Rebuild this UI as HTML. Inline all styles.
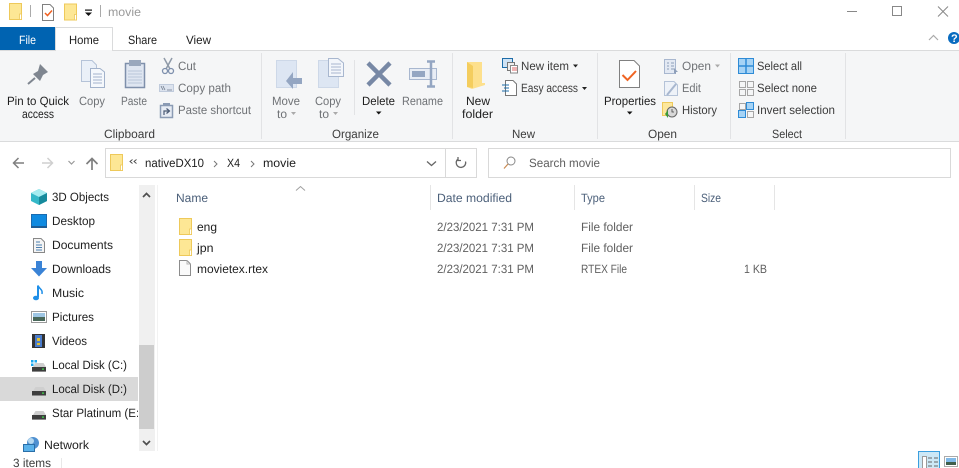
<!DOCTYPE html>
<html><head><meta charset="utf-8"><title>movie</title>
<style>
html,body{margin:0;padding:0;background:#fff;width:959px;height:468px;overflow:hidden}
svg{display:block}
text{font-family:"Liberation Sans",sans-serif;font-size:12px;fill:#1e1e1e;text-rendering:geometricPrecision}
.g{fill:#6f7276}
.b{fill:#3c3c3c}
.h{fill:#4c607a}
.r{fill:#5f5f5f}
.hf{fill:#fde795;stroke:#eec95a;stroke-width:1}
</style></head><body>
<svg width="959" height="468" viewBox="0 0 959 468" xmlns="http://www.w3.org/2000/svg">
<defs>
<g id="f"><path class="hf" d="M.5 .5H12.500V16.500H.5Z"/><rect x="10.500" y="11" width="2" height="5.500" fill="#fff" stroke="#eec95a" stroke-width=".8"/></g>
<g id="drive"><path d="M3 7L5.500 3H13.500L16 7Z" fill="#cfcfcf"/><rect x="2" y="7" width="14" height="5" fill="#3e3e3e"/><rect x="2" y="11" width="14" height="1" fill="#8a8a8a"/><rect x="12" y="8.500" width="2" height="1.200" fill="#3fe04a"/></g>
</defs>

<!-- title bar -->
<use href="#f" x="9" y="3"/>
<rect x="30" y="5" width="1" height="12" fill="#aaa"/>
<path d="M42.500 4.500H50L53.500 8V20.500H42.500Z" fill="#fff" stroke="#808080"/>
<path d="M45 13L47.500 15.500L52 10.500" fill="none" stroke="#f06020" stroke-width="1.500"/>
<use href="#f" x="64" y="3.500"/>
<rect x="85" y="9.500" width="7" height="1.200" fill="#111"/><path d="M85 12.500H92L88.500 16Z" fill="#111"/>
<rect x="100" y="5" width="1" height="12" fill="#aaa"/>
<text x="108" y="16" textLength="33" lengthAdjust="spacingAndGlyphs" style="fill:#9a9a9a">movie</text>
<path d="M847 11.500H857" stroke="#888" stroke-width="1"/>
<rect x="892.500" y="6.500" width="9" height="9" fill="none" stroke="#888"/>
<path d="M938 6.500L948 16.500M948 6.500L938 16.500" stroke="#888" stroke-width="1"/>

<!-- tabs -->
<rect x="0" y="27" width="55" height="23" fill="#0063b1"/>
<text x="19" y="44" textLength="17" lengthAdjust="spacingAndGlyphs" style="fill:#fff">File</text>
<rect x="0" y="50" width="959" height="1" fill="#dadbdc"/>
<path d="M55.500 51V27.500H112.500V51" fill="#fff" stroke="#dadbdc"/>
<rect x="56" y="50" width="56" height="2" fill="#f5f6f7"/>
<text x="69" y="44" textLength="30" lengthAdjust="spacingAndGlyphs">Home</text>
<text x="128" y="44" textLength="29" lengthAdjust="spacingAndGlyphs">Share</text>
<text x="186" y="44" textLength="25" lengthAdjust="spacingAndGlyphs">View</text>
<path d="M929 40L933.500 35.500L938 40" fill="none" stroke="#aaa" stroke-width="1.200"/>
<circle cx="954" cy="38" r="6" fill="#0a6cc0"/>
<text x="951" y="42" style="fill:#fff;font-weight:bold;font-size:11px">?</text>

<!-- ribbon -->
<rect x="0" y="51" width="959" height="90" fill="#f5f6f7"/>
<rect x="0" y="141" width="959" height="1" fill="#dadbdc"/>
<rect x="261" y="53" width="1" height="86" fill="#e2e3e5"/>
<rect x="452" y="53" width="1" height="86" fill="#e2e3e5"/>
<rect x="597" y="53" width="1" height="86" fill="#e2e3e5"/>
<rect x="730" y="53" width="1" height="86" fill="#e2e3e5"/>
<rect x="845" y="53" width="1" height="86" fill="#e2e3e5"/>
<rect x="354" y="60" width="1" height="55" fill="#e2e3e5"/>

<!-- pin -->
<path d="M40 64L48 72L43 75L40 81L33 74L38 71Z" fill="#7f8690"/><path d="M35 78L28 84" stroke="#7f8690" stroke-width="2"/>
<text x="7" y="105" textLength="62" lengthAdjust="spacingAndGlyphs">Pin to Quick</text>
<text x="22" y="118" textLength="32" lengthAdjust="spacingAndGlyphs">access</text>

<!-- copy -->
<path d="M81.500 60.500H92L96.500 65V81.500H81.500Z" fill="#eaf0f8" stroke="#b5c3d8"/>
<path d="M90.500 68.500H100L104.500 72V87.500H90.500Z" fill="#f5f8fc" stroke="#a2b2cb"/>
<path d="M93 74H102M93 77H102M93 80H102M93 83H102" stroke="#a2b2cb"/>
<text x="79" y="105" textLength="26" lengthAdjust="spacingAndGlyphs" class="g">Copy</text>

<!-- paste -->
<rect x="125.500" y="63.500" width="19" height="24" fill="#dfe6f1" stroke="#7f90ab" stroke-width="1.500"/>
<rect x="129" y="60" width="12" height="6" fill="#9aa8bd"/>
<path d="M128 71H142M128 74H142M128 77H142M128 80H142M128 83H142" stroke="#b8c5d9"/>
<text x="121" y="105" textLength="26" lengthAdjust="spacingAndGlyphs" class="g">Paste</text>

<!-- small clipboard -->
<path d="M164 58L170 69M172 58L166 69" stroke="#8f9aa8" stroke-width="1.500"/>
<circle cx="165" cy="71" r="2.500" fill="none" stroke="#7e90ad" stroke-width="1.300"/><circle cx="171" cy="71" r="2.500" fill="none" stroke="#7e90ad" stroke-width="1.300"/>
<text x="178" y="70" textLength="18" lengthAdjust="spacingAndGlyphs" class="g">Cut</text>
<rect x="159.500" y="84.500" width="14" height="7" fill="#dce3ee" stroke="#c0cbdc"/>
<path d="M161 86L163 90M163 86L165 90M167 90H172" stroke="#6f7a8c" stroke-width=".8"/>
<text x="178" y="92" textLength="53" lengthAdjust="spacingAndGlyphs" class="g">Copy path</text>
<path d="M160.500 105.500H172.500V117.500H160.500Z" fill="#e7ecf4" stroke="#8b9bb4" stroke-width="1.500"/>
<rect x="163" y="103" width="7" height="3" fill="#8b9bb4"/>
<path d="M164 115L164 111H169M166.500 108.500L169.500 111L166.500 113.500" fill="none" stroke="#4b5b75" stroke-width="1.200"/>
<text x="178" y="114" textLength="73" lengthAdjust="spacingAndGlyphs" class="g">Paste shortcut</text>
<text x="104" y="138" textLength="51" lengthAdjust="spacingAndGlyphs" class="b">Clipboard</text>

<!-- move to -->
<rect x="276.500" y="60.500" width="20" height="27" fill="#dde6f3" stroke="#cdd8e8"/>
<path d="M302 78H293V72L286 81L293 89V84H302Z" fill="#94a6c2"/>
<text x="272" y="105" textLength="28" lengthAdjust="spacingAndGlyphs" class="g">Move</text>
<text x="277" y="118" textLength="10" lengthAdjust="spacingAndGlyphs" class="g">to</text>
<path d="M291 112H296L293.500 115Z" fill="#aaa"/>
<!-- copy to -->
<rect x="318.500" y="60.500" width="20" height="27" fill="#dde6f3" stroke="#cdd8e8"/>
<path d="M328.500 58.500H338L343.500 63V76.500H328.500Z" fill="#f3f6fb" stroke="#a8b7cf"/>
<path d="M331 64H341M331 67H341M331 70H341M331 73H341" stroke="#a8b7cf"/>
<text x="315" y="105" textLength="26" lengthAdjust="spacingAndGlyphs" class="g">Copy</text>
<text x="319" y="118" textLength="10" lengthAdjust="spacingAndGlyphs" class="g">to</text>
<path d="M333 112H338L335.500 115Z" fill="#aaa"/>
<!-- delete -->
<path d="M368 63L390 85M390 63L368 85" stroke="#7788a5" stroke-width="4.500"/>
<text x="362" y="105" textLength="33" lengthAdjust="spacingAndGlyphs">Delete</text>
<path d="M376 111.500H381.500L378.700 114.500Z" fill="#111"/>
<!-- rename -->
<rect x="409.500" y="68.500" width="27" height="11" fill="#e8edf5" stroke="#a8b7cf"/>
<rect x="412" y="71" width="13" height="6" fill="#94a6c2"/>
<path d="M431 62V86M427 61.500H435M427 86.500H435" stroke="#94a6c2" stroke-width="2.500"/>
<text x="402" y="105" textLength="41" lengthAdjust="spacingAndGlyphs" class="g">Rename</text>
<text x="332" y="138" textLength="47" lengthAdjust="spacingAndGlyphs" class="b">Organize</text>

<!-- new folder -->
<path d="M467 62H482V83H485V85L472 89L467 87Z" fill="#fde08d"/>
<path d="M467 62L473 66V88L467 87Z" fill="#f4cd5e"/>
<text x="466" y="105" textLength="24" lengthAdjust="spacingAndGlyphs">New</text>
<text x="462" y="118" textLength="31" lengthAdjust="spacingAndGlyphs">folder</text>
<!-- new item -->
<rect x="502.500" y="58.500" width="10" height="9" fill="#cfe3f5" stroke="#1d6ca8"/>
<rect x="507.500" y="62.500" width="7" height="8" fill="#eee" stroke="#777"/>
<rect x="510.500" y="65.500" width="7" height="7.500" fill="#fff" stroke="#888"/>
<path d="M512 68H517M512 70H517" stroke="#d66"/>
<text x="521" y="70" textLength="48" lengthAdjust="spacingAndGlyphs" class="b">New item</text>
<path d="M573 64.500H578L575.500 67.500Z" fill="#222"/>
<!-- easy access -->
<path d="M505.500 80.500H513L516.500 84V95.500H505.500Z" fill="#fff" stroke="#777"/>
<path d="M502 85H509M504 88H509M502 91H509" stroke="#1d6ca8"/>
<text x="521" y="92" textLength="57" lengthAdjust="spacingAndGlyphs" class="b">Easy access</text>
<path d="M582 87H587L584.500 90Z" fill="#222"/>
<text x="512" y="138" textLength="23" lengthAdjust="spacingAndGlyphs" class="b">New</text>

<!-- properties -->
<path d="M619.500 60.500H634L639.500 66V87.500H619.500Z" fill="#fff" stroke="#808080"/>
<path d="M622.500 75L627.500 80L636 71" fill="none" stroke="#ef6423" stroke-width="2"/>
<text x="604" y="105" textLength="52" lengthAdjust="spacingAndGlyphs">Properties</text>
<path d="M627 111.500H632.500L629.700 114.500Z" fill="#111"/>
<!-- open -->
<rect x="664.500" y="59.500" width="11" height="14" fill="#e3e9f3" stroke="#a8b7cf"/>
<path d="M667 63H669M671 63H674M667 66H669M671 66H674M667 69H669M671 69H674" stroke="#8e9fba"/>
<path d="M674 73V68L678 72H676V74Z" fill="#8e9fba"/>
<text x="682" y="70" textLength="29" lengthAdjust="spacingAndGlyphs" class="g">Open</text>
<path d="M715 64.500H720L717.500 67.500Z" fill="#aaa"/>
<!-- edit -->
<path d="M664.500 81.500H674L677.500 85V95.500H664.500Z" fill="#eef2f8" stroke="#b5c3d8"/>
<path d="M667 95L676 84" stroke="#a8b7cf" stroke-width="2"/>
<text x="682" y="92" textLength="19" lengthAdjust="spacingAndGlyphs" class="g">Edit</text>
<!-- history -->
<rect x="662.500" y="102.500" width="10" height="13" fill="#fde79c" stroke="#eec95a"/>
<circle cx="672" cy="112" r="5" fill="#d8d8d8" stroke="#666"/>
<path d="M672 109V112H674" fill="none" stroke="#444" stroke-width=".8"/>
<path d="M665 114L668 110V118Z" fill="#3a9a3a"/>
<text x="682" y="114" textLength="35" lengthAdjust="spacingAndGlyphs" class="b">History</text>
<text x="648" y="138" textLength="29" lengthAdjust="spacingAndGlyphs" class="b">Open</text>

<!-- select -->
<rect x="738.500" y="58.500" width="15" height="15" fill="#a6d3f5" stroke="#2e8bd6"/>
<path d="M746 58V74M738 66H754" stroke="#2e8bd6" stroke-width="1.500"/>
<text x="757" y="70" textLength="45" lengthAdjust="spacingAndGlyphs" class="b">Select all</text>
<g fill="none" stroke="#a6a6a6"><rect x="739.500" y="81.500" width="6" height="6"/><rect x="747.500" y="81.500" width="6" height="6"/><rect x="739.500" y="89.500" width="6" height="6"/><rect x="747.500" y="89.500" width="6" height="6"/></g>
<text x="757" y="92" textLength="60" lengthAdjust="spacingAndGlyphs" class="b">Select none</text>
<rect x="739.500" y="103.500" width="6" height="6" fill="none" stroke="#a6a6a6"/>
<rect x="746.500" y="102.500" width="7" height="7" fill="#a6d3f5" stroke="#2e8bd6"/>
<rect x="738.500" y="110.500" width="7" height="7" fill="#a6d3f5" stroke="#2e8bd6"/>
<rect x="747.500" y="111.500" width="6" height="6" fill="none" stroke="#a6a6a6"/>
<text x="757" y="114" textLength="78" lengthAdjust="spacingAndGlyphs" class="b">Invert selection</text>
<text x="772" y="138" textLength="30" lengthAdjust="spacingAndGlyphs" class="b">Select</text>

<!-- nav buttons -->
<path d="M24 163H14M18.500 158L13.500 163L18.500 168" fill="none" stroke="#7f7f7f" stroke-width="1.500"/>
<path d="M42 163H52M47.500 158L52.500 163L47.500 168" fill="none" stroke="#cfcfcf" stroke-width="1.500"/>
<path d="M68.500 161L71.500 164L74.500 161" fill="none" stroke="#9a9a9a" stroke-width="1.200"/>
<path d="M92 170V159M86.500 164L92 158.500L97.500 164" fill="none" stroke="#7f7f7f" stroke-width="1.700"/>

<!-- address -->
<rect x="105.500" y="148.500" width="371" height="29" fill="#fff" stroke="#d9d9d9"/>
<rect x="445" y="149" width="1" height="28" fill="#d9d9d9"/>
<use href="#f" x="110" y="154"/>
<path d="M132.500 159.500L130 161.500L132.500 163.500M136.500 159.500L134 161.500L136.500 163.500" fill="none" stroke="#444" stroke-width=".9"/>
<text x="145" y="167" textLength="59" lengthAdjust="spacingAndGlyphs">nativeDX10</text>
<path d="M214 161L217 164L214 167" fill="none" stroke="#777" stroke-width="1"/>
<text x="227" y="167" textLength="13" lengthAdjust="spacingAndGlyphs">X4</text>
<path d="M251 161L254 164L251 167" fill="none" stroke="#777" stroke-width="1"/>
<text x="263" y="167" textLength="33" lengthAdjust="spacingAndGlyphs">movie</text>
<path d="M427 161.500L431.500 165.500L436 161.500" fill="none" stroke="#666" stroke-width="1.300"/>
<path d="M457.500 159.500A4.700 4.700 0 1 0 465.500 161.500M458 157V160.500H461" fill="none" stroke="#666" stroke-width="1.300"/>

<!-- search -->
<rect x="488.500" y="148.500" width="462" height="29" fill="#fff" stroke="#d9d9d9"/>
<circle cx="511" cy="161" r="4" fill="none" stroke="#888"/><path d="M508 164L504 168.500" stroke="#c98a52" stroke-width="1.200"/>
<text x="529" y="167" textLength="71" lengthAdjust="spacingAndGlyphs" class="r">Search movie</text>

<!-- sidebar -->
<rect x="0" y="377" width="138" height="24" fill="#d9d9d9"/>
<!-- 3D -->
<path d="M39 189L47 193V201L39 205L31 201V193Z" fill="#35b8c8"/><path d="M39 197L47 193L39 189L31 193Z" fill="#a6ecf0"/><path d="M39 197V205L47 201V193Z" fill="#168a9c"/>
<text x="52" y="201" textLength="57" lengthAdjust="spacingAndGlyphs">3D Objects</text>
<!-- desktop -->
<rect x="31.500" y="214.500" width="15" height="12" fill="#0f8ae0" stroke="#1a6bb0"/><rect x="31" y="226" width="16" height="2" fill="#1d5c94"/>
<text x="52" y="225" textLength="43" lengthAdjust="spacingAndGlyphs">Desktop</text>
<!-- documents -->
<path d="M33.500 238.500H41L44.500 242V252.500H33.500Z" fill="#f4f4f4" stroke="#888"/><path d="M36 242H40M36 245H42M36 247.500H42M36 250H42" stroke="#4d7fb0"/>
<text x="52" y="249" textLength="61" lengthAdjust="spacingAndGlyphs">Documents</text>
<!-- downloads -->
<path d="M36 261H42V268H47L39 276.500L31 268H36Z" fill="#3a83d6"/>
<text x="52" y="273" textLength="59" lengthAdjust="spacingAndGlyphs">Downloads</text>
<!-- music -->
<path d="M38 285.500V297" stroke="#1f8fe8" stroke-width="2"/><path d="M38 285.500C39 289 43 289 42 294" fill="none" stroke="#1f8fe8" stroke-width="1.500"/><ellipse cx="36" cy="298" rx="3" ry="2.300" fill="#1f8fe8"/>
<text x="52" y="297" textLength="32" lengthAdjust="spacingAndGlyphs">Music</text>
<!-- pictures -->
<rect x="31.500" y="311.500" width="15" height="11" fill="#fff" stroke="#9a9a9a"/><rect x="33" y="313" width="12" height="4" fill="#9ec6e4"/><rect x="33" y="317" width="12" height="4" fill="#49685a"/>
<text x="52" y="321" textLength="42" lengthAdjust="spacingAndGlyphs">Pictures</text>
<!-- videos -->
<rect x="32" y="334" width="13" height="14" fill="#333"/><rect x="35" y="335" width="7" height="12" fill="#4a7ccc"/><rect x="37" y="338" width="3" height="3" fill="#e0c030"/><rect x="37" y="343" width="3" height="2" fill="#e0c030"/>
<text x="52" y="345" textLength="35" lengthAdjust="spacingAndGlyphs">Videos</text>
<!-- C -->
<g fill="#1aa7ee"><rect x="31" y="360" width="2.500" height="2.500"/><rect x="34.500" y="360" width="2.500" height="2.500"/><rect x="31" y="363.500" width="2.500" height="2.500"/><rect x="34.500" y="363.500" width="2.500" height="2.500"/></g>
<use href="#drive" x="30" y="360"/>
<text x="52" y="369" textLength="75" lengthAdjust="spacingAndGlyphs">Local Disk (C:)</text>
<use href="#drive" x="30" y="384"/>
<text x="52" y="393" textLength="75" lengthAdjust="spacingAndGlyphs">Local Disk (D:)</text>
<use href="#drive" x="30" y="408"/>
<svg x="0" y="400" width="138" height="26"><text x="52" y="17" textLength="91" lengthAdjust="spacingAndGlyphs">Star Platinum (E:)</text></svg>
<!-- network -->
<circle cx="33" cy="443" r="6" fill="#4f90d0"/><circle cx="31" cy="441" r="3" fill="#b5d8f0"/>
<rect x="23.500" y="444.500" width="11" height="7" fill="#5ab1ea" stroke="#2a6fa8"/>
<text x="44" y="449" textLength="45" lengthAdjust="spacingAndGlyphs">Network</text>

<!-- scrollbar -->
<rect x="139" y="185" width="16" height="266" fill="#f0f0f0"/>
<rect x="139" y="345" width="15" height="84" fill="#cdcdcd"/>
<path d="M143 197L146.500 193.500L150 197" fill="none" stroke="#505050" stroke-width="1.700"/>
<path d="M143 441L146.500 444.500L150 441" fill="none" stroke="#505050" stroke-width="1.700"/>
<rect x="157" y="185" width="1" height="266" fill="#f2f2f2"/>

<!-- columns -->
<path d="M296 190.500L300.500 186.500L305 190.500" fill="none" stroke="#a0a0a0"/>
<text x="176" y="202" textLength="32" lengthAdjust="spacingAndGlyphs" class="h">Name</text>
<rect x="430" y="185" width="1" height="25" fill="#e5e5e5"/>
<text x="437" y="202" textLength="75" lengthAdjust="spacingAndGlyphs" class="h">Date modified</text>
<rect x="574" y="185" width="1" height="25" fill="#e5e5e5"/>
<text x="581" y="202" textLength="24" lengthAdjust="spacingAndGlyphs" class="h">Type</text>
<rect x="694" y="185" width="1" height="25" fill="#e5e5e5"/>
<text x="701" y="202" textLength="20" lengthAdjust="spacingAndGlyphs" class="h">Size</text>
<rect x="774" y="185" width="1" height="25" fill="#e5e5e5"/>

<!-- rows -->
<use href="#f" x="179" y="218"/>
<text x="197" y="231" textLength="20" lengthAdjust="spacingAndGlyphs">eng</text>
<text x="437" y="231" textLength="97" lengthAdjust="spacingAndGlyphs" class="r">2/23/2021 7:31 PM</text>
<text x="581" y="231" textLength="52" lengthAdjust="spacingAndGlyphs" class="r">File folder</text>
<use href="#f" x="179" y="239"/>
<text x="197" y="252" textLength="16.500" lengthAdjust="spacingAndGlyphs">jpn</text>
<text x="437" y="252" textLength="97" lengthAdjust="spacingAndGlyphs" class="r">2/23/2021 7:31 PM</text>
<text x="581" y="252" textLength="52" lengthAdjust="spacingAndGlyphs" class="r">File folder</text>
<path d="M179.500 260.500H187L190.500 264V275.500H179.500Z" fill="#fafafa" stroke="#8c8c8c"/>
<path d="M187 260.500V264H190.500" fill="none" stroke="#b5b5b5"/>
<text x="197" y="273" textLength="71" lengthAdjust="spacingAndGlyphs">movietex.rtex</text>
<text x="437" y="273" textLength="97" lengthAdjust="spacingAndGlyphs" class="r">2/23/2021 7:31 PM</text>
<text x="581" y="273" textLength="46" lengthAdjust="spacingAndGlyphs" class="r">RTEX File</text>
<text x="744" y="273" textLength="23" lengthAdjust="spacingAndGlyphs" class="r">1 KB</text>

<!-- status -->
<text x="13" y="467" textLength="38" lengthAdjust="spacingAndGlyphs" class="b">3 items</text>
<rect x="61" y="458" width="1" height="10" fill="#e8e8e8"/>
<rect x="918.500" y="451.500" width="21" height="20" fill="#cce8f6" stroke="#3a9fdf"/>
<rect x="922.500" y="456.500" width="4" height="14" fill="#fff" stroke="#9a9a9a"/>
<path d="M928 458H932M934 458H938M928 462H932M934 462H938M928 466H932M934 466H938" stroke="#666"/>
<rect x="944.500" y="456.500" width="13" height="10" fill="#fff" stroke="#aaa"/>
<rect x="946" y="458" width="10" height="4" fill="#7fb9e8"/><rect x="946" y="462" width="10" height="3" fill="#3f5f4c"/>
</svg>
</body></html>
